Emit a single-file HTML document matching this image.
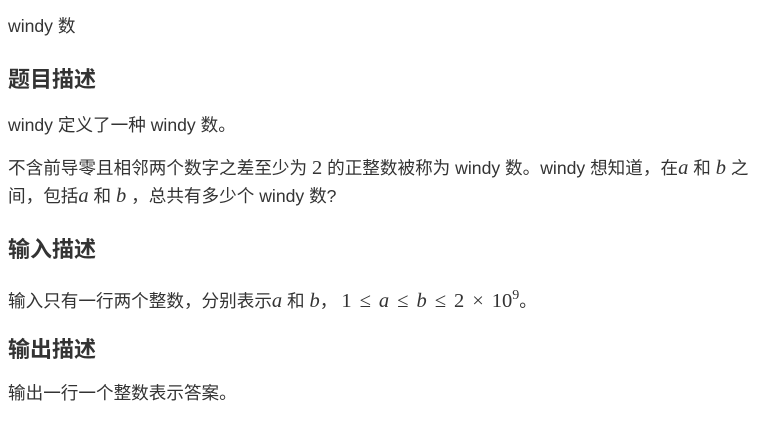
<!DOCTYPE html>
<html><head><meta charset="utf-8"><style>
body{margin:0;width:768px;height:428px;background:#fff;color:#333;font-family:"Liberation Sans","Noto Sans CJK SC",sans-serif;font-size:17.6px;position:relative;overflow:hidden}
.l{position:absolute;left:8px;white-space:nowrap;line-height:22px}
.h{font-size:22px;font-weight:bold;line-height:28px}
.m{font-family:"Liberation Serif","DejaVu Serif",serif;font-size:20.5px}
.i{font-style:italic}
.o{margin:0 8px}
</style></head><body>
<div class="l" style="top:15px">windy 数</div>
<div class="l h" style="top:66px">题目描述</div>
<div class="l" style="top:114px">windy 定义了一种 windy 数。</div>
<div class="l" style="top:157px">不含前导零且相邻两个数字之差至少为 <span class="m">2</span> 的正整数被称为 windy 数。windy 想知道，在<span class="m i">a</span> 和 <span class="m i">b</span> 之</div>
<div class="l" style="top:185px">间，包括<span class="m i">a</span> 和 <span class="m i">b</span> ，总共有多少个 windy 数?</div>
<div class="l h" style="top:236px">输入描述</div>
<div class="l" style="top:285px">输入只有一行两个整数，分别表示<span class="m i">a</span> 和 <span class="m i">b</span>，<span class="m" style="margin-left:4px">1<span class="o">≤</span><i>a</i><span class="o">≤</span><i>b</i><span class="o">≤</span>2<span class="o">×</span>10<sup style="font-size:14px">9</sup></span>。</div>
<div class="l h" style="top:336px">输出描述</div>
<div class="l" style="top:382px">输出一行一个整数表示答案。</div>
</body></html>
